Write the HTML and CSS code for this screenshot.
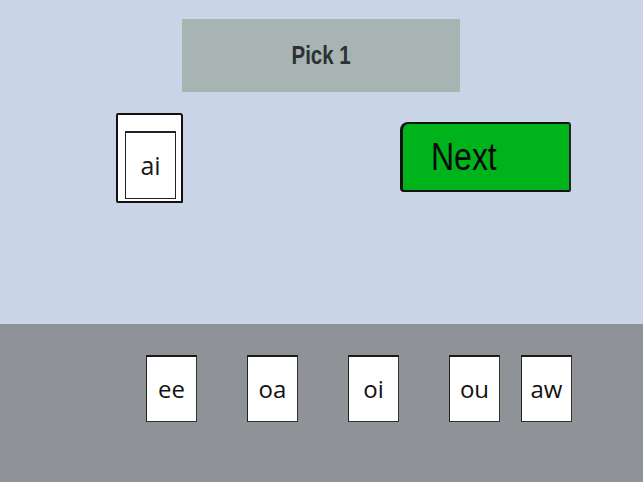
FILE: index.html
```
<!DOCTYPE html>
<html lang="en">
<head>
  <meta charset="UTF-8" />
  <meta name="viewport" content="width=device-width, initial-scale=1.0" />
  <title>Pick 1</title>
  <link rel="stylesheet" href="styles.css">
</head>
<body>
  <div id="board">
    <div id="prompt"><span class="narrow">Pick 1</span></div>

    <div id="play-row">
      <div class="answer-slot">
        <div class="answer-tile">ai</div>
      </div>
      <div id="next-button"><span class="narrow narrow-left">Next</span></div>
    </div>
  </div>

  <div id="tray">
    <div class="tile">ee</div>
    <div class="tile">oa</div>
    <div class="tile">oi</div>
    <div class="tile">ou</div>
    <div class="tile tile-close">aw</div>
  </div>
</body>
</html>
```

FILE: styles.css
```
body {
  margin: 0;
  background: #c9d5e7;
  font-family: 'Open Sans', 'DejaVu Sans', sans-serif;
  overflow: hidden;
}
.narrow {
  display: inline-block;
  font-family: 'Liberation Sans', Arial, sans-serif;
  transform: scaleX(0.82);
}
.narrow-left {
  transform-origin: left center;
}
#board {
  height: 324px;
  padding-top: 19px;
  box-sizing: border-box;
}
#prompt {
  margin-left: 182px;
  width: 278px;
  height: 73px;
  background: #a7b4b2;
  color: #2e3133;
  font-weight: bold;
  font-size: 25px;
  display: flex;
  align-items: center;
  justify-content: center;
}
#play-row {
  display: flex;
  align-items: flex-start;
  margin-top: 21px;
  padding-left: 116px;
}
.answer-slot {
  width: 67px;
  height: 90px;
  box-sizing: border-box;
  background: #fff;
  border: 2px solid #111;
  border-left-width: 2.5px;
  border-radius: 2px 3px 1px 2px;
  padding: 16px 5px 2px 7px;
}
.answer-tile {
  height: 100%;
  box-sizing: border-box;
  border: 1.5px solid #222;
  border-top-width: 2px;
  display: flex;
  align-items: center;
  justify-content: center;
  font-size: 25px;
  color: #1a1a1a;
  padding-bottom: 2px;
}
#next-button {
  margin-left: 217px;
  margin-top: 9px;
  width: 171px;
  height: 70px;
  box-sizing: border-box;
  background: #00b31b;
  border-top: 2px solid #111;
  border-bottom: 2px solid #111;
  border-left: 3px solid #111;
  border-right: 2px solid #222;
  border-radius: 8px 3px 2px 4px;
  padding-left: 28px;
  display: flex;
  align-items: center;
  font-size: 39px;
  color: #0a0a0a;
}
#tray {
  height: 158px;
  background: #8f9398;
  display: flex;
  align-items: flex-start;
  gap: 50px;
  padding: 31px 0 0 146px;
  box-sizing: border-box;
}
.tile {
  width: 51px;
  height: 67px;
  box-sizing: border-box;
  background: #fff;
  border: 1px solid #333;
  border-top: 2px solid #1a1a1a;
  border-left: 1.5px solid #222;
  display: flex;
  align-items: center;
  justify-content: center;
  font-size: 24px;
  color: #111;
  padding-bottom: 2px;
}
.tile-close {
  margin-left: -29px;
}
```
